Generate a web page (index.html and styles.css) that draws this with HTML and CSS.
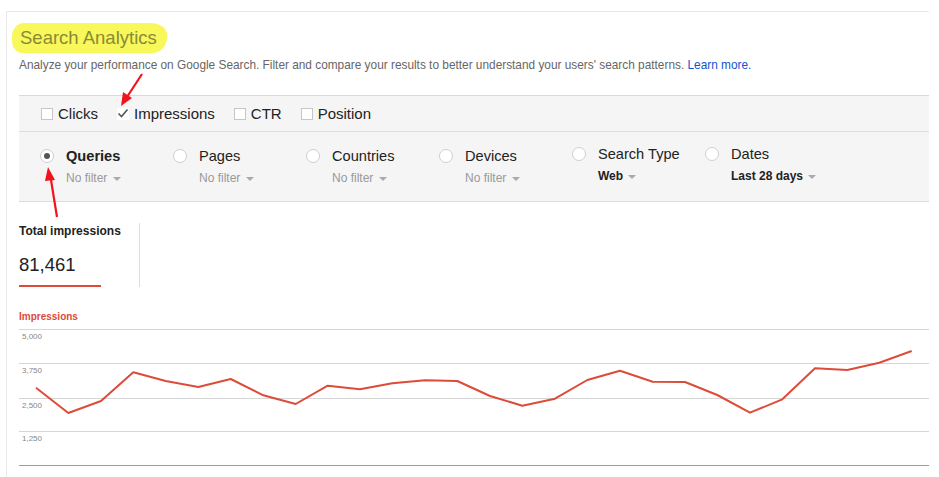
FILE: index.html
```html
<!DOCTYPE html>
<html lang="en">
<head>
    <meta charset="UTF-8">
    <title>Search Analytics</title>
    <link rel="stylesheet" href="styles.css">
</head>
<body>
    <div class="page">
        <h1 class="title"><span class="marker">Search Analytics</span></h1>
        <p class="intro">Analyze your performance on Google Search. Filter and compare your results to better understand your users' search patterns. <a href="#">Learn more.</a></p>

        <div class="panel">
            <div class="metrics">
                <label class="metric"><span class="box"></span>Clicks</label>
                <label class="metric"><span class="box checked"><svg width="12" height="12" viewBox="0 0 12 12"><path d="M1.5 6.5 L4.5 9.5 L10.5 2.5" fill="none" stroke="#555" stroke-width="1.6"/></svg></span>Impressions</label>
                <label class="metric"><span class="box"></span>CTR</label>
                <label class="metric"><span class="box"></span>Position</label>
            </div>
            <div class="groups">
                <div class="group">
                    <span class="radio on"></span>
                    <div class="group-text">
                        <div class="group-name bold">Queries</div>
                        <div class="filter">No filter <span class="caret"></span></div>
                    </div>
                </div>
                <div class="group">
                    <span class="radio"></span>
                    <div class="group-text">
                        <div class="group-name">Pages</div>
                        <div class="filter">No filter <span class="caret"></span></div>
                    </div>
                </div>
                <div class="group">
                    <span class="radio"></span>
                    <div class="group-text">
                        <div class="group-name">Countries</div>
                        <div class="filter">No filter <span class="caret"></span></div>
                    </div>
                </div>
                <div class="group">
                    <span class="radio"></span>
                    <div class="group-text">
                        <div class="group-name">Devices</div>
                        <div class="filter">No filter <span class="caret"></span></div>
                    </div>
                </div>
                <div class="group raised">
                    <span class="radio"></span>
                    <div class="group-text">
                        <div class="group-name">Search Type</div>
                        <div class="filter set">Web <span class="caret"></span></div>
                    </div>
                </div>
                <div class="group raised">
                    <span class="radio"></span>
                    <div class="group-text">
                        <div class="group-name">Dates</div>
                        <div class="filter set">Last 28 days <span class="caret"></span></div>
                    </div>
                </div>
            </div>
        </div>

        <div class="totals">
            <div class="total">
                <div class="total-label">Total impressions</div>
                <div class="total-value">81,461</div>
            </div>
        </div>

        <div class="chart-title">Impressions</div>
        <svg class="chart" width="910" height="145" viewBox="0 0 910 145">
            <g stroke="#d6d6d6" stroke-width="1">
                <line x1="0" y1="4.5" x2="910" y2="4.5"/>
                <line x1="0" y1="38.5" x2="910" y2="38.5"/>
                <line x1="0" y1="73.5" x2="910" y2="73.5"/>
                <line x1="0" y1="106.5" x2="910" y2="106.5"/>
            </g>
            <line x1="0" y1="140.5" x2="910" y2="140.5" stroke="#9e9e9e" stroke-width="1"/>
            <g class="axis">
                <text x="3" y="14">5,000</text>
                <text x="3" y="48">3,750</text>
                <text x="3" y="83">2,500</text>
                <text x="3" y="116">1,250</text>
            </g>
            <polyline fill="none" stroke="#dd4b39" stroke-width="2" stroke-linejoin="round"
                points="17,62.7 49.3,88 82,76 114.3,47.3 146.7,56 179.3,62 211.7,54 244.3,70.3 276.7,79 308.7,60.7 341,64.3 373.3,58.3 406,55.3 438.3,56 471,71 503.3,80.7 536,73.7 568.3,55 601,45.7 633.7,56.7 666,57 698.3,70 731,87.7 763.3,74.3 796,43.3 828.3,45 860.3,37.7 892.7,26"/>
        </svg>
    </div>

    <svg class="notes" width="939" height="477" viewBox="0 0 939 477">
        <g stroke="#f0141e" stroke-width="2.2" fill="#f0141e">
            <line x1="142" y1="74" x2="127" y2="97"/>
            <polygon points="121,106 123,92 132,98" stroke="none"/>
            <line x1="57" y1="217" x2="51" y2="180"/>
            <polygon points="48,167 45,181 55,180" stroke="none"/>
        </g>
    </svg>
</body>
</html>
```

FILE: styles.css
```css
body {
    margin: 0;
    font-family: 'Liberation Sans', Arial, sans-serif;
    color: #222;
    background: #fff;
}

.page {
    position: relative;
    margin: 11px 10px 0 6px;
    padding: 11px 0 0 12px;
    border-top: 1px solid #e8e8e8;
    border-left: 1px solid #e8e8e8;
    height: 466px;
    box-sizing: border-box;
}

.title {
    margin: 0;
    font-size: 18.5px;
    font-weight: normal;
    line-height: 30px;
}

.marker {
    display: inline-block;
    margin-left: -7px;
    padding: 0 10px 0 8px;
    color: #8a8a35;
    background: #f8f85a;
    border-radius: 12px 16px 14px 10px / 14px 12px 16px 12px;
}

.intro {
    margin: 4px 0 0;
    font-size: 11.85px;
    color: #666;
    line-height: 16px;
}

.intro a {
    color: #1155cc;
    text-decoration: none;
}

.panel {
    margin: 22px 0 0;
    background: #f5f5f5;
    border-top: 1px solid #d9d9d9;
    border-bottom: 1px solid #dcdcdc;
}

.metrics {
    display: flex;
    align-items: center;
    gap: 19px;
    height: 35px;
    padding-left: 22px;
    border-bottom: 1px solid #dcdcdc;
}

.metric {
    display: flex;
    align-items: center;
    gap: 5px;
    font-size: 15px;
    color: #222;
}

.box {
    display: block;
    width: 10px;
    height: 10px;
    background: #fff;
    border: 1px solid #c6c6c6;
}

.box.checked {
    border-color: transparent;
    position: relative;
}

.box.checked svg {
    position: absolute;
    left: -1px;
    top: -2px;
}

.groups {
    display: flex;
    height: 69px;
    padding-left: 21px;
}

.group {
    display: flex;
    gap: 12px;
    width: 133px;
    padding-top: 15px;
}

.group.raised {
    padding-top: 13px;
}

.radio {
    flex: none;
    width: 12px;
    height: 12px;
    margin-top: 2px;
    border: 1px solid #cfcfcf;
    border-radius: 50%;
    background: #fff;
    position: relative;
}

.radio.on::after {
    content: "";
    position: absolute;
    left: 3px;
    top: 3px;
    width: 6px;
    height: 6px;
    border-radius: 50%;
    background: #555;
}

.group-name {
    font-size: 14.6px;
    line-height: 18px;
    white-space: nowrap;
}

.group-name.bold {
    font-weight: bold;
}

.filter {
    margin-top: 6px;
    font-size: 12px;
    color: #999;
    white-space: nowrap;
}

.filter.set {
    color: #222;
    font-weight: bold;
}

.caret {
    display: inline-block;
    margin-left: 2px;
    vertical-align: middle;
    border-left: 4px solid transparent;
    border-right: 4px solid transparent;
    border-top: 4px solid #aaa;
}

.totals {
    display: flex;
    margin-top: 21px;
}

.total {
    width: 120px;
    height: 64px;
    border-right: 1px solid #ddd;
}

.total-label {
    font-size: 12px;
    font-weight: bold;
    line-height: 16px;
}

.total-value {
    display: inline-block;
    margin-top: 14px;
    width: 82px;
    padding-bottom: 8px;
    font-size: 18.5px;
    line-height: 24px;
    border-bottom: 2px solid #dd4b39;
}

.chart-title {
    margin-top: 24px;
    font-size: 10px;
    font-weight: bold;
    color: #dd4b39;
    line-height: 12px;
}

.chart {
    display: block;
    margin-top: 2px;
}

.axis text {
    font-family: 'Liberation Sans', Arial, sans-serif;
    font-size: 8px;
    fill: #888;
}

.notes {
    position: absolute;
    left: 0;
    top: 0;
    pointer-events: none;
}
```
